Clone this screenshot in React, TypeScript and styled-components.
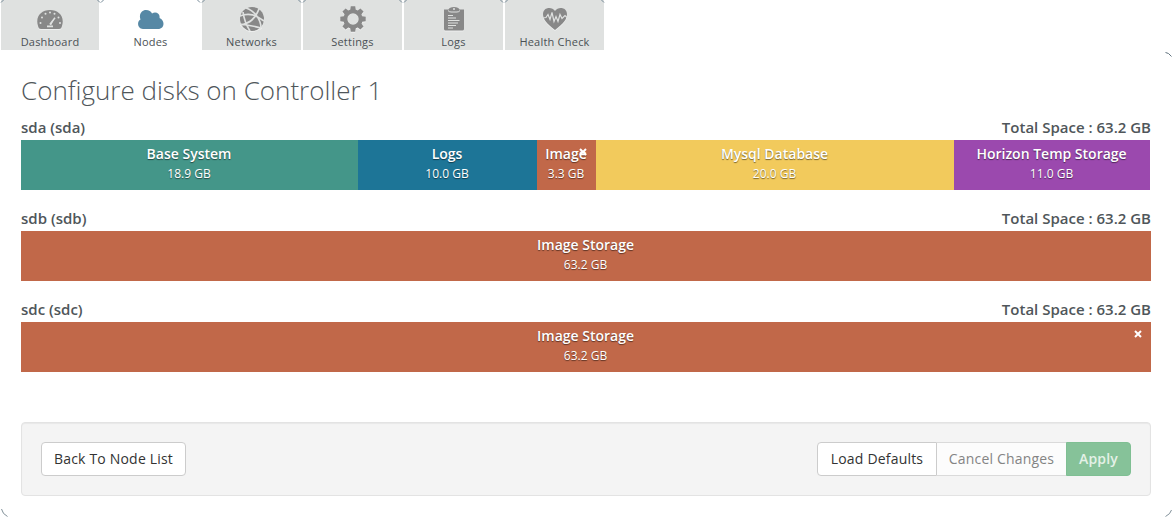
import React from "react";
import styled, { createGlobalStyle, css } from "styled-components";

const Global = createGlobalStyle`
  * { box-sizing: border-box; }
  body { margin: 0; background: #fff; color: #4f565a; font-family: "Open Sans", "Noto Sans", sans-serif; }
`;

const Page = styled.div`
  height: 517px;
  display: flex;
  flex-direction: column;
  overflow: hidden;
`;

const Tabs = styled.nav`
  display: flex;
  gap: 2px;
  height: 51px;
`;

const Tab = styled.a<{ $active?: boolean }>`
  position: relative;
  width: 99px;
  height: 50px;
  display: flex;
  flex-direction: column;
  align-items: center;
  background: ${(p) => (p.$active ? "#fff" : "#dfe1e0")};
  color: ${(p) => (p.$active ? "#5688a5" : "#888")};
  &:first-child { border-left: 1px solid #fff; }
`;

const TabCorners = styled.svg`
  position: absolute;
  top: 0;
  left: -1px;
`;

const TabIcon = styled.svg`
  width: 28px;
  height: 28px;
  margin-top: 5px;
  flex: none;
  filter: drop-shadow(0 1px 0 rgba(255, 255, 255, 0.5));
`;

const TabLabel = styled.span`
  font-size: 11px;
  line-height: 15px;
  margin-top: 1px;
  letter-spacing: 0.22px;
  color: #4b5155;
  white-space: nowrap;
`;

const Panel = styled.main`
  position: relative;
  flex: 1;
  padding: 21px 21px 0;
`;

const PanelCorner = styled.svg<{ $side: "tr" | "bl" | "br" }>`
  position: absolute;
  width: 8px;
  height: 8px;
  ${(p) => p.$side === "tr" && css`right: 0; top: 0;`}
  ${(p) => p.$side === "bl" && css`left: 0; bottom: 0;`}
  ${(p) => p.$side === "br" && css`right: 0; bottom: 0;`}
`;

const Title = styled.h1`
  margin: 0;
  font-size: 26px;
  font-weight: 300;
  line-height: 36px;
`;

const Disk = styled.section`
  margin-top: 9px;
  height: 82px;
  &:first-of-type { margin-top: 10px; }
`;

const DiskHeader = styled.header`
  display: flex;
  justify-content: space-between;
  height: 22px;
  font-size: 15px;
  font-weight: 600;
  line-height: 19px;
`;

const Bar = styled.div`
  display: flex;
  height: 50px;
  width: 1130px;
`;

const Volume = styled.div<{ $color: string; $width: number }>`
  position: relative;
  width: ${(p) => p.$width}px;
  background: ${(p) => p.$color};
  color: #fff;
  text-align: center;
  text-shadow: 0 1px 1px rgba(0, 0, 0, 0.5);
  padding: 4px 9px 0 8px;
`;

const VolumeName = styled.div`
  font-size: 14px;
  font-weight: 600;
  line-height: 20px;
  white-space: nowrap;
`;

const VolumeSize = styled.div`
  font-size: 12px;
  line-height: 19px;
  white-space: nowrap;
`;

const Remove = styled.svg`
  position: absolute;
  top: 7.5px;
  right: 9px;
  width: 8px;
  height: 8px;
`;

const Footer = styled.footer`
  display: flex;
  justify-content: space-between;
  margin-top: 40px;
  width: 1130px;
  height: 74px;
  padding: 19px;
  border: 1px solid #e3e3e3;
  border-radius: 4px;
  background: #f4f4f4;
  box-shadow: inset 0 1px 1px rgba(0, 0, 0, 0.05);
`;

const Group = styled.div`
  display: flex;
`;

const Button = styled.button<{ $width: number; $kind?: "disabled" | "apply"; $radius?: string }>`
  width: ${(p) => p.$width}px;
  height: 34px;
  padding: 0;
  font: 14px/20px "Open Sans", "Noto Sans", sans-serif;
  letter-spacing: 0.19px;
  color: #333;
  background: #fff;
  border: 1px solid #ccc;
  border-radius: ${(p) => p.$radius ?? "4px"};
  white-space: nowrap;
  ${(p) => p.$kind === "disabled" && css`
    color: #848484;
    background: #fcfcfc;
    border-color: #dadada;
    border-width: 1px 0;
  `}
  ${(p) => p.$kind === "apply" && css`
    color: #e4f1e7;
    font-weight: 600;
    background: #86c299;
    border-color: #7fbf93;
  `}
`;

const icons: Record<string, React.ReactNode> = {
  Dashboard: (
    <>
      <path d="M2 21C-1 12 5 5 14 5s15 7 12 16c-.5 2-1 3-3 3H5c-2 0-2.500-1-3-3z" fill="currentColor" />
      <g fill="#dfe1e0">
        <circle cx="14" cy="7.500" r="1" /><circle cx="9.500" cy="8.800" r="1" /><circle cx="18.500" cy="8.800" r="1" />
        <circle cx="6" cy="12.500" r="1" /><circle cx="22.500" cy="12.500" r="1" /><circle cx="4.500" cy="18" r="1" /><circle cx="24" cy="18" r="1" />
        <path d="m19 12.500-3.800 7.700-1.600-1zM11 20.500h6v1.800h-6z" />
        <path d="m19 12.800-5 6.500" stroke="#dfe1e0" strokeWidth="1.500" />
      </g>
    </>
  ),
  Nodes: <path d="M6 24C.5 24-.5 16.500 3.500 14.500 1.500 9 5 5 9 5c3 0 5 1.200 6 3.500 4-2.500 8.500.5 7.500 4.500C28.500 15.500 27.500 24 21 24z" fill="currentColor" />,
  Networks: (
    <>
      <circle cx="14" cy="14" r="12" fill="currentColor" />
      <path d="M8 3c9 3 15 12 15 20M21 4C17 14 12 18 3 20M2 11c8-3 17-1 24 5M5 7c1 7 3 13 7 19M2 19c7 1 14 2 21 4" stroke="#dfe1e0" strokeWidth="1.700" fill="none" />
    </>
  ),
  Settings: (
    <>
      <g fill="currentColor">
        {[0, 45, 90, 135].map((angle) => (
          <path key={angle} transform={`rotate(${angle} 14 14)`} d="m11.200 5 .6-3.700h4.400l.6 3.700v4h-5.600zM11.200 23l.6 3.700h4.400l.6-3.700v-4h-5.600z" />
        ))}
      </g>
      <circle cx="14" cy="14" r="7.700" fill="none" stroke="currentColor" strokeWidth="4" />
      <circle cx="14" cy="14" r="5.700" fill="#dfe1e0" />
    </>
  ),
  Logs: (
    <>
      <path d="M4 4.500h4.500C9 3 11 2 14 2s5 1 5.500 2.500H24V24q0 1.500-1.500 1.500h-17Q4 25.500 4 24z" fill="currentColor" />
      <path d="M8 5.500q1 1.500 3 1.500h6q2 0 3-1.500M8 10.500h5M8 13h8M8 15.500h11.500M8 18h10M8 20.500h8M8 23h5" stroke="#dfe1e0" strokeWidth="1" fill="none" />
      <circle cx="14" cy="4" r="1" fill="#dfe1e0" />
    </>
  ),
  "Health Check": (
    <>
      <path d="M14 25C5 18 2 14 2 9c0-7 9-8 12-3 3-5 12-4 12 3 0 5-3 9-12 16z" fill="currentColor" />
      <path d="m2 13 3-.5 2-3 2 5 2-7 2 9 2-5 2 5 2-7 2 4 3-3 2 2" stroke="#dfe1e0" strokeWidth="1.200" fill="none" />
    </>
  ),
};

type VolumeData = { name: string; size: string; color: string; width: number; removable?: boolean };
const imageColor = "#c16849";
const disks: { id: string; volumes: VolumeData[] }[] = [
  {
    id: "sda",
    volumes: [
      { name: "Base System", size: "18.9 GB", color: "#449689", width: 337 },
      { name: "Logs", size: "10.0 GB", color: "#1d7597", width: 179 },
      { name: "Image", size: "3.3 GB", color: imageColor, width: 59, removable: true },
      { name: "Mysql Database", size: "20.0 GB", color: "#f2ca5c", width: 358 },
      { name: "Horizon Temp Storage", size: "11.0 GB", color: "#9b49ae", width: 196 },
    ],
  },
  { id: "sdb", volumes: [{ name: "Image Storage", size: "63.2 GB", color: imageColor, width: 1130 }] },
  { id: "sdc", volumes: [{ name: "Image Storage", size: "63.2 GB", color: imageColor, width: 1130, removable: true }] },
];

export default function App() {
  return (
    <Page>
      <Global />
      <Tabs>
        {Object.keys(icons).map((name) => (
          <Tab key={name} $active={name === "Nodes"}>
            <TabCorners width="101" height="3">
              <path d="M1 2.500 3.500 0M97.500 0l2.500 2.500" stroke="#748896" fill="none" />
            </TabCorners>
            <TabIcon viewBox="0 0 28 28">{icons[name]}</TabIcon>
            <TabLabel>{name}</TabLabel>
          </Tab>
        ))}
      </Tabs>
      <Panel>
        <PanelCorner $side="tr"><path d="M1.500 1.500q3 0 6 4" stroke="#61737f" fill="none" /></PanelCorner>
        <PanelCorner $side="bl"><path d="M1.500 0q1 5 6 7.500" stroke="#61737f" strokeWidth=".8" fill="none" /></PanelCorner>
        <PanelCorner $side="br"><path d="M7.500 1q-1 4-6 6.500" stroke="#61737f" strokeWidth=".8" fill="none" /></PanelCorner>
        <Title>Configure disks on Controller 1</Title>
        {disks.map((disk) => (
          <Disk key={disk.id}>
            <DiskHeader><span>{disk.id} ({disk.id})</span><span>Total Space : 63.2 GB</span></DiskHeader>
            <Bar>
              {disk.volumes.map((v) => (
                <Volume key={v.name} $color={v.color} $width={v.width}>
                  <VolumeName>{v.name}</VolumeName>
                  <VolumeSize>{v.size}</VolumeSize>
                  {v.removable && <Remove viewBox="0 0 8 8"><path d="m1 1 6 6M7 1 1 7" stroke="#fff" strokeWidth="2" /></Remove>}
                </Volume>
              ))}
            </Bar>
          </Disk>
        ))}
        <Footer>
          <Button $width={145}>Back To Node List</Button>
          <Group>
            <Button $width={120} $radius="4px 0 0 4px">Load Defaults</Button>
            <Button $width={129} $kind="disabled" $radius="0">Cancel Changes</Button>
            <Button $width={65} $kind="apply" $radius="0 4px 4px 0">Apply</Button>
          </Group>
        </Footer>
      </Panel>
    </Page>
  );
}
